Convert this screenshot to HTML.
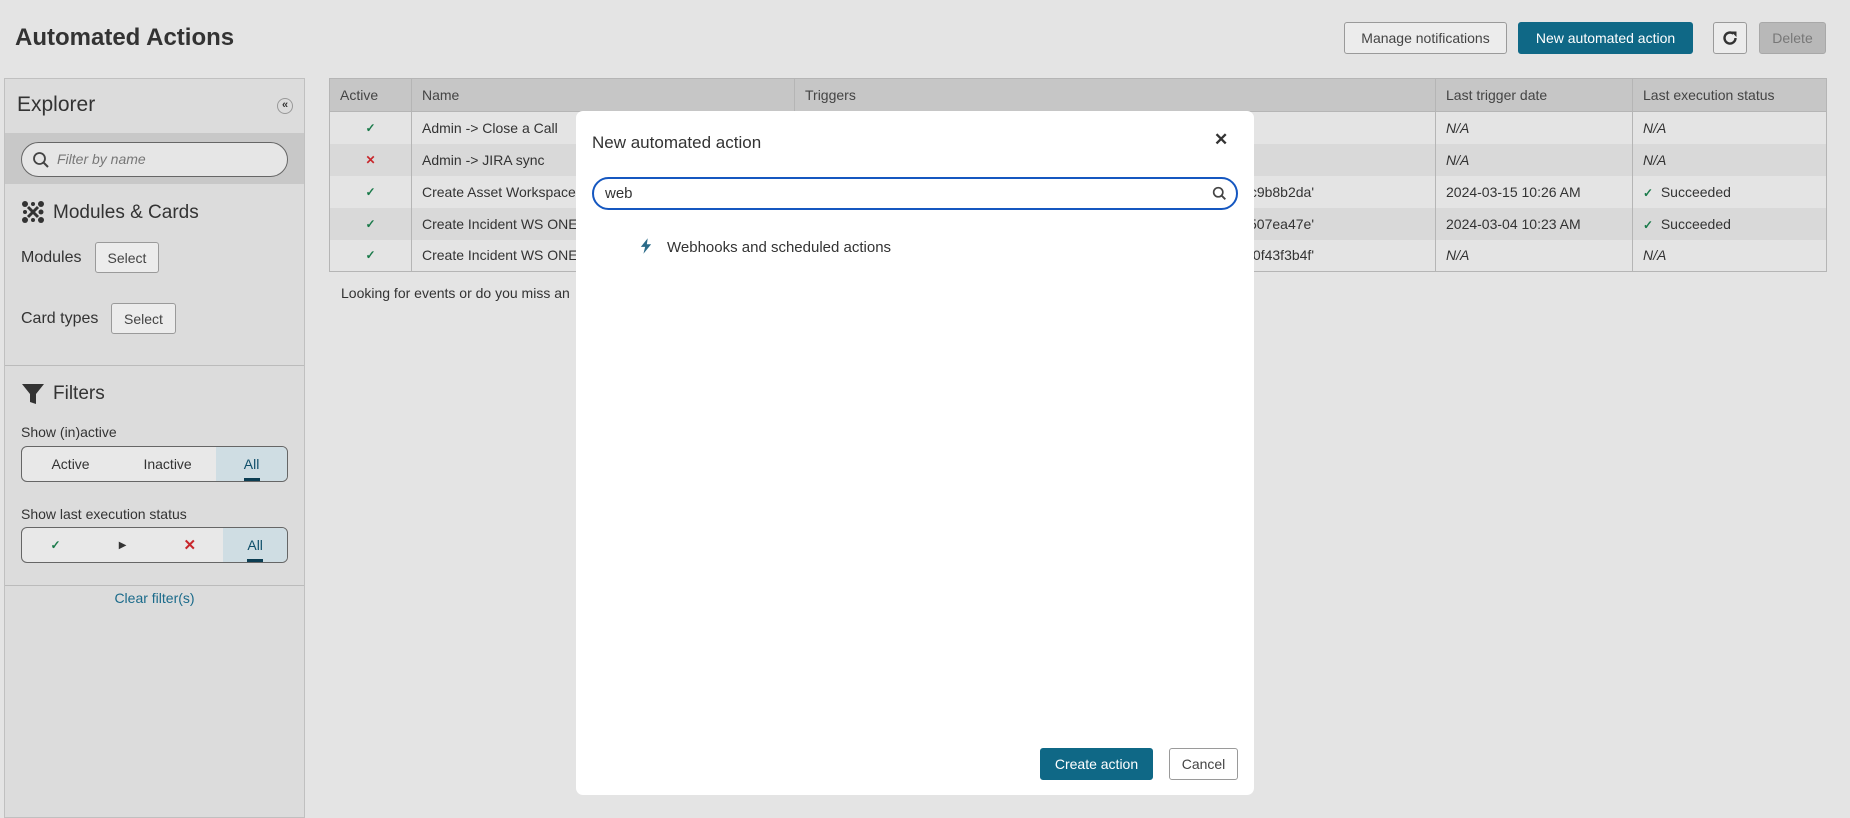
<!DOCTYPE html>
<html><head><meta charset="utf-8"><style>
*{box-sizing:border-box;margin:0;padding:0}
body{width:1850px;height:818px;overflow:hidden;background:#e4e4e4;font-family:"Liberation Sans",sans-serif;color:#333;font-size:14px;position:relative}
.a{position:absolute}
.btn{position:absolute;border:1px solid #9a9a9a;border-radius:3px;background:#ececec;display:flex;align-items:center;justify-content:center;font-size:14px;color:#444}
.pri{background:#0f6886;border-color:#0f6886;color:#fff}
table{position:absolute;left:329px;top:78px;width:1498px;border-collapse:collapse;font-size:14px}
td,th{border:1px solid #b5b5b5;height:32px;padding:0 10px;text-align:left;font-weight:normal;white-space:nowrap;overflow:hidden}
th{background:#c6c6c6;height:33px;color:#444}
td{background:#e4e4e4;border-top:none;border-bottom:none}
tr:nth-child(odd) td{background:#d9d9d9}
tr:last-child td{border-bottom:1px solid #b5b5b5}
.ok{color:#1a7a4a;font-size:12px;font-weight:bold}.x{color:#c8262b;font-size:12px;font-weight:bold}
i{font-style:italic}
.seg{position:absolute;left:20px;width:267px;border:1px solid #666;border-radius:6px;display:flex;align-items:center;overflow:hidden;background:#e8e8e8}
.seg div{flex:1;text-align:center;height:100%;display:flex;align-items:center;justify-content:center;position:relative}
.seg .sel{background:#cfdde3;color:#0f4f6a}
.seg .sel:after{content:"";position:absolute;bottom:0;left:50%;margin-left:-8px;width:16px;height:3px;background:#0c3d52}
</style></head><body>
<div class="a" style="left:15px;top:24px;font-size:24px;font-weight:bold;color:#333">Automated Actions</div>
<div class="btn" style="left:1344px;top:22px;width:163px;height:32px">Manage notifications</div>
<div class="btn pri" style="left:1518px;top:22px;width:175px;height:32px">New automated action</div>
<div class="btn" style="left:1713px;top:22px;width:34px;height:32px"><svg width="18" height="18" viewBox="0 0 18 18"><path d="M14.5 9A5.5 5.5 0 1 1 12.4 4.7" fill="none" stroke="#333" stroke-width="2.4"/><path d="M10 2.5L15.5 2.5 15.5 8Z" fill="#333"/></svg></div>
<div class="btn" style="left:1759px;top:22px;width:67px;height:32px;background:#b8b8b8;border-color:#a8a8a8;color:#777">Delete</div>

<div class="a" style="left:4px;top:78px;width:301px;height:740px;background:#dcdcdc;border:1px solid #c0c0c0">
 <div class="a" style="left:12px;top:14px;font-size:21px;color:#333">Explorer</div>
 <div class="a" style="left:272px;top:19px;width:16px;height:16px;border:1px solid #999;border-radius:50%;font-size:11px;line-height:13px;text-align:center;font-weight:bold">«</div>
 <div class="a" style="left:0;top:54px;width:299px;height:51px;background:#c8c8c8"></div>
 <div class="a" style="left:16px;top:63px;width:267px;height:35px;border:1px solid #666;border-radius:18px;background:#e6e6e6"><svg class="a" style="left:10px;top:8px" width="18" height="18" viewBox="0 0 18 18"><circle cx="7.5" cy="7.5" r="5.5" fill="none" stroke="#444" stroke-width="1.8"/><path d="M11.5 11.5L16 16" stroke="#444" stroke-width="2"/></svg><span class="a" style="left:35px;top:8px;font-style:italic;color:#777">Filter by name</span></div>
 <svg class="a" style="left:16px;top:121px" width="24" height="24" viewBox="0 0 24 24" fill="#333"><circle cx="4" cy="4" r="3"/><circle cx="20" cy="4" r="3"/><circle cx="4" cy="20" r="3"/><circle cx="20" cy="20" r="3"/><circle cx="12" cy="4" r="2"/><circle cx="4" cy="12" r="2"/><circle cx="20" cy="12" r="2.5"/><circle cx="12" cy="20" r="2"/><path d="M7 7L17 17M17 7L7 17" stroke="#333" stroke-width="3"/></svg>
 <div class="a" style="left:48px;top:123px;font-size:19px">Modules &amp; Cards</div>
 <div class="a" style="left:16px;top:170px;font-size:16px">Modules</div>
 <div class="btn" style="left:90px;top:163px;width:64px;height:31px">Select</div>
 <div class="a" style="left:16px;top:231px;font-size:16px">Card types</div>
 <div class="btn" style="left:106px;top:224px;width:65px;height:31px">Select</div>
 <div class="a" style="left:0;top:286px;width:299px;border-top:1px solid #bbb"></div>
 <svg class="a" style="left:16px;top:303px" width="24" height="24" viewBox="0 0 24 24" fill="#333"><path d="M1 2H23L15 12V22L9 20V12Z"/></svg>
 <div class="a" style="left:48px;top:304px;font-size:19px">Filters</div>
 <div class="a" style="left:16px;top:345px;font-size:14px">Show (in)active</div>
 <div class="seg" style="top:367px;height:36px;left:16px"><div>Active</div><div>Inactive</div><div class="sel" style="flex:0.73">All</div></div>
 <div class="a" style="left:16px;top:427px;font-size:14px">Show last execution status</div>
 <div class="seg" style="top:448px;height:36px;left:16px"><div class="ok">✓</div><div style="font-size:10px">▶</div><div class="x" style="font-size:15px">✕</div><div class="sel" style="flex:0.95">All</div></div>
 <div class="a" style="left:0;top:506px;width:299px;border-top:1px solid #bbb"></div>
 <div class="a" style="left:0;top:511px;width:299px;text-align:center;color:#1a6a8a;font-size:14px">Clear filter(s)</div>
</div>

<table>
<tr><th style="width:82px">Active</th><th style="width:383px">Name</th><th style="width:641px">Triggers</th><th style="width:197px">Last trigger date</th><th>Last execution status</th></tr>
<tr><td class="ok" style="text-align:center">✓</td><td>Admin -&gt; Close a Call</td><td></td><td><i>N/A</i></td><td><i>N/A</i></td></tr>
<tr><td class="x" style="text-align:center">✕</td><td>Admin -&gt; JIRA sync</td><td></td><td><i>N/A</i></td><td><i>N/A</i></td></tr>
<tr><td class="ok" style="text-align:center">✓</td><td>Create Asset Workspace</td><td style="text-align:right;padding-right:121px">8c9b8b2da'</td><td>2024-03-15 10:26 AM</td><td><span class="ok">✓</span>&nbsp; Succeeded</td></tr>
<tr><td class="ok" style="text-align:center">✓</td><td>Create Incident WS ONE</td><td style="text-align:right;padding-right:121px">65507ea47e'</td><td>2024-03-04 10:23 AM</td><td><span class="ok">✓</span>&nbsp; Succeeded</td></tr>
<tr><td class="ok" style="text-align:center">✓</td><td>Create Incident WS ONE</td><td style="text-align:right;padding-right:121px">90f43f3b4f'</td><td><i>N/A</i></td><td><i>N/A</i></td></tr>
</table>
<div class="a" style="left:341px;top:285px">Looking for events or do you miss an</div>

<div class="a" style="left:576px;top:111px;width:678px;height:684px;background:#fff;border-radius:7px">
 <div class="a" style="left:16px;top:22px;font-size:17px;color:#333">New automated action</div>
 <div class="a" style="left:638px;top:19px;font-size:17px;font-weight:bold">✕</div>
 <div class="a" style="left:16px;top:66px;width:646px;height:33px;border:2px solid #1557c0;border-radius:17px"><span class="a" style="left:11px;top:6px;font-size:15px">web</span><svg class="a" style="left:618px;top:7px" width="15" height="15" viewBox="0 0 18 18"><circle cx="7.5" cy="7.5" r="5.5" fill="none" stroke="#444" stroke-width="2"/><path d="M11.5 11.5L16 16" stroke="#444" stroke-width="2.2"/></svg></div>
 <svg class="a" style="left:64px;top:127px" width="12" height="16" viewBox="0 0 14 18"><path d="M9 0L1 10H6L4 18L13 7H8Z" fill="#2a6a88"/></svg>
 <div class="a" style="left:91px;top:128px;font-size:15px">Webhooks and scheduled actions</div>
 <div class="btn pri" style="left:464px;top:637px;width:113px;height:32px">Create action</div>
 <div class="btn" style="left:593px;top:637px;width:69px;height:32px;background:#fff">Cancel</div>
</div>
</body></html>
